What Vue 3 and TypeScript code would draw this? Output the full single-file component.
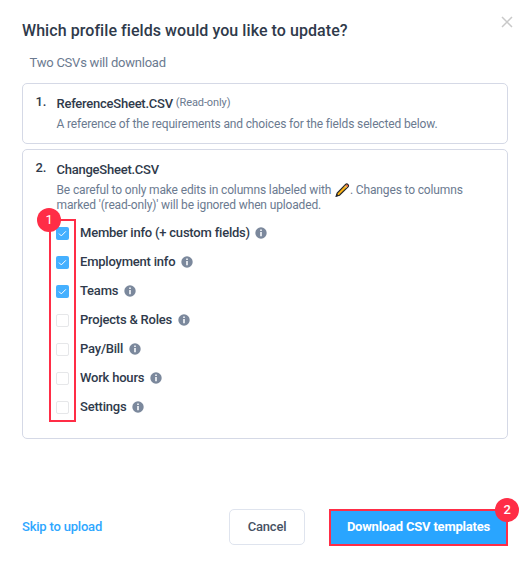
<script setup lang="ts">
import { ref } from 'vue'

interface Field {
  label: string
  checked: boolean
}

const fields = ref<Field[]>([
  { label: 'Member info (+ custom fields)', checked: true },
  { label: 'Employment info', checked: true },
  { label: 'Teams', checked: true },
  { label: 'Projects & Roles', checked: false },
  { label: 'Pay/Bill', checked: false },
  { label: 'Work hours', checked: false },
  { label: 'Settings', checked: false },
])
</script>

<template>
  <main class="dialog">
    <header class="head">
      <h1>Which profile fields would you like to update?</h1>
      <button class="close" aria-label="Close">
        <svg width="12" height="12" viewBox="0 0 12 12"><path d="M1 1l10 10M11 1L1 11" fill="none" stroke="#c9c9c9" stroke-width="1.5" /></svg>
      </button>
    </header>
    <p class="sub">Two CSVs will download</p>

    <section class="card first">
      <span class="num">1.</span>
      <div class="body">
        <h2>ReferenceSheet.CSV <small>(Read-only)</small></h2>
        <p class="desc">A reference of the requirements and choices for the fields selected below.</p>
      </div>
    </section>

    <section class="card second">
      <span class="num">2.</span>
      <div class="body">
        <h2>ChangeSheet.CSV</h2>
        <p class="desc">
          Be careful to only make edits in columns labeled with
          <svg class="pencil" width="15" height="15" viewBox="0 0 15 15">
            <path d="M1.2 13.2L2.2 10L10.6 1.4Q11.8 .4 13 1.6Q14 2.7 13 3.9L4.5 12.2Z" fill="#fbb315" stroke="#24262c" stroke-width="1.2" />
            <path d="M10.7 2.2Q11.8 1.2 12.6 2Q13.3 2.8 12.4 3.8Z" fill="#f0525f" />
            <path d="M9.6 2.9l2 2" stroke="#c9cfd6" stroke-width=".8" />
            <path d="M.8 13.8l.9-3 2.2 2z" fill="#24262c" />
          </svg>. Changes to columns<br>
          marked '(read-only)' will be ignored when uploaded.
        </p>
        <ul class="fields">
          <li v-for="f in fields" :key="f.label">
            <span class="box" :class="{ on: f.checked }" role="checkbox" :aria-checked="f.checked" @click="f.checked = !f.checked">
              <svg v-if="f.checked" width="13" height="13" viewBox="0 0 13 13"><path d="M3 6.6l2.3 2.3 4.6-4.6" fill="none" stroke="#fff" stroke-width="1" /></svg>
            </span>
            <span class="label">{{ f.label }}</span>
            <svg class="info" width="12" height="12" viewBox="0 0 12 12">
              <circle cx="6" cy="6" r="5.7" fill="#7b889c" />
              <path d="M5 2.5h2v1.5H5zM5 4.9h2v4.3H5z" fill="#dfe3e9" />
            </svg>
          </li>
        </ul>
        <div class="marker"><b class="badge">1</b></div>
      </div>
    </section>

    <footer class="foot">
      <a class="skip">Skip to upload</a>
      <button class="cancel">Cancel</button>
      <button class="download"><span>Download CSV templates</span><b class="badge">2</b></button>
    </footer>
  </main>
</template>

<style>
body {
  background: #fff;
}
</style>

<style scoped>
* {
  box-sizing: border-box;
}
.dialog {
  width: 530px;
  height: 567px;
  padding: 14px 22px 0;
  font-family: Roboto, "Liberation Sans", sans-serif;
  letter-spacing: -0.2px;
  color: #2f3a4b;
}
h1, h2, p, ul {
  margin: 0;
  padding: 0;
}
button {
  font-family: inherit;
  letter-spacing: inherit;
  padding: 0;
  background: none;
  border: 0;
}
.head {
  display: flex;
  justify-content: space-between;
  height: 32px;
}
h1 {
  font-size: 16px;
  line-height: 33px;
  font-weight: 500;
  letter-spacing: 0.065px;
  white-space: nowrap;
}
.close {
  width: 12px;
  height: 12px;
  margin: 2px -5px 0 0;
}
.close svg {
  display: block;
}
.sub {
  padding-left: 7.5px;
  height: 37px;
  line-height: 33px;
  font-size: 13px;
  letter-spacing: -0.23px;
  color: #6b7a90;
}
.card {
  display: flex;
  border: 1px solid #d5d9e6;
  border-radius: 5px;
}
.first {
  height: 61px;
}
.second {
  height: 290px;
  margin-top: 5px;
}
.num {
  width: 33px;
  padding: 10px 0 0 12.5px;
  font-size: 13px;
  line-height: 16px;
  font-weight: 500;
}
.body {
  position: relative;
  flex: 1;
  padding-top: 12px;
}
h2 {
  padding-left: 0.5px;
  font-size: 13px;
  line-height: 16px;
  font-weight: 500;
  letter-spacing: -0.24px;
  white-space: nowrap;
}
small {
  position: relative;
  top: -2px;
  font-size: 11px;
  font-weight: 400;
  letter-spacing: -0.1px;
  color: #6b7a90;
}
.desc {
  padding: 5px 0 0 0.5px;
  font-size: 12px;
  line-height: 15px;
  letter-spacing: -0.145px;
  color: #6b7a90;
  white-space: nowrap;
}
.first .desc {
  padding-top: 4px;
}
.pencil {
  margin: -5px 0 -2px 1px;
  vertical-align: -3px;
  position: relative;
  top: -1.5px;
}
.fields {
  list-style: none;
  margin-top: 5px;
}
.fields li {
  display: flex;
  align-items: center;
  height: 29.15px;
}
.box {
  width: 13px;
  height: 13px;
  border: 1px solid #e6e7e9;
  border-radius: 2px;
  position: relative;
  top: 0.5px;
}
.box.on {
  border: 0;
  background: #45b0ff;
}
.box svg {
  display: block;
}
.label {
  margin-left: 11px;
  font-size: 13px;
  line-height: 16px;
  font-weight: 500;
  letter-spacing: -0.21px;
}
.info {
  margin-left: 5.5px;
}
.marker {
  position: absolute;
  left: -7px;
  top: 69px;
  width: 27px;
  height: 203px;
  border: 2px solid #ff2d46;
  pointer-events: none;
}
.badge {
  position: absolute;
  width: 24px;
  height: 24px;
  border-radius: 50%;
  background: #ff2d46;
  color: #fff;
  font-size: 13px;
  line-height: 23px;
  font-weight: 400;
  text-align: center;
}
.marker .badge {
  left: -14px;
  top: -13px;
}
.foot {
  display: flex;
  margin-top: 70px;
  height: 37px;
}
.skip {
  flex: 1;
  font-size: 13px;
  line-height: 35px;
  font-weight: 500;
  color: #2ea7ff;
}
.cancel {
  width: 76px;
  height: 36px;
  border: 1px solid #dfe4ee;
  border-radius: 5px;
  font-size: 13px;
  line-height: 34px;
  font-weight: 500;
  color: #465163;
}
.download {
  position: relative;
  width: 179px;
  height: 37px;
  margin-left: 24px;
  padding-bottom: 2px;
  border: 2px solid #ff2d46;
  background: #29a5ff;
  color: #fff;
  font-size: 13px;
  line-height: 31px;
  font-weight: 700;
  white-space: nowrap;
}
.download .badge {
  right: -13px;
  top: -13px;
  font-weight: 500;
}
</style>
